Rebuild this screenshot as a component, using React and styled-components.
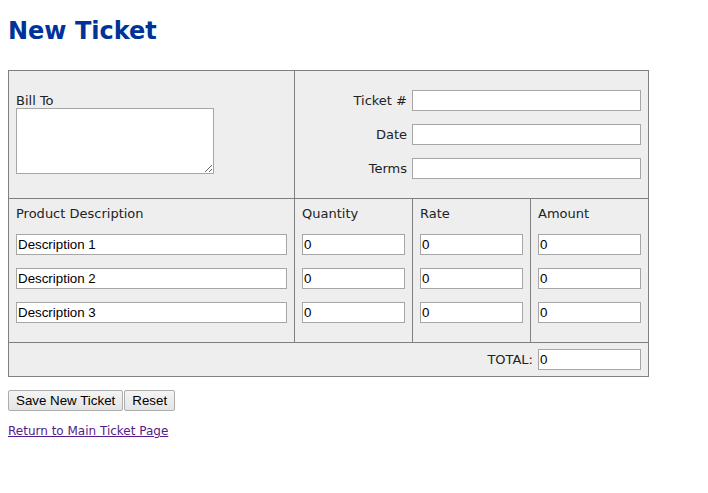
import styled, { createGlobalStyle } from 'styled-components';

const rows = ['Description 1', 'Description 2', 'Description 3'];

export default function App() {
  return (
    <>
      <GlobalStyle />
      <Page>
        <Title>New Ticket</Title>
        <form onSubmit={(e) => e.preventDefault()}>
          <TicketGrid>
            <Cell $center $lift>
              <Label>Bill To</Label>
              <TextArea />
            </Cell>
            <Cell $span={3} $center>
              <MetaList>
                <MetaRow>
                  <Label>Ticket #</Label>
                  <MetaInput />
                </MetaRow>
                <MetaRow>
                  <Label>Date</Label>
                  <MetaInput />
                </MetaRow>
                <MetaRow>
                  <Label>Terms</Label>
                  <MetaInput />
                </MetaRow>
              </MetaList>
            </Cell>

            <Cell>
              <Label>Product Description</Label>
              {rows.map((r) => (
                <Field key={r} defaultValue={r} />
              ))}
            </Cell>
            <Cell>
              <Label>Quantity</Label>
              {rows.map((r) => (
                <Field key={r} defaultValue="0" />
              ))}
            </Cell>
            <Cell>
              <Label>Rate</Label>
              {rows.map((r) => (
                <Field key={r} defaultValue="0" />
              ))}
            </Cell>
            <Cell>
              <Label>Amount</Label>
              {rows.map((r) => (
                <Field key={r} defaultValue="0" />
              ))}
            </Cell>

            <TotalCell>
              <Label>TOTAL:</Label>
              <TotalInput defaultValue="0" />
            </TotalCell>
          </TicketGrid>

          <Buttons>
            <Button type="submit">Save New Ticket</Button>
            <Button type="reset">Reset</Button>
          </Buttons>
        </form>
        <BackLink href="#">Return to Main Ticket Page</BackLink>
      </Page>
    </>
  );
}

const GlobalStyle = createGlobalStyle`
  body {
    margin: 0;
    background: #fff;
    font-family: 'DejaVu Sans', Verdana, sans-serif;
    font-size: 13px;
    color: #222;
  }
`;

const Page = styled.div`
  padding: 17px 8px 8px;
`;

const Title = styled.h1`
  margin: 0 0 25px;
  font-size: 24px;
  line-height: 28px;
  font-weight: bold;
  color: #003399;
`;

const TicketGrid = styled.div`
  display: grid;
  grid-template-columns: 285px 117px 117px 117px;
  grid-template-rows: 127px 143px 33px;
  gap: 1px;
  width: max-content;
  border: 1px solid #808080;
  background: #808080;
`;

const Cell = styled.div`
  grid-column: span ${(p) => p.$span || 1};
  background: #eeeeee;
  padding: 7px;
  display: flex;
  flex-direction: column;
  justify-content: ${(p) => (p.$center ? 'center' : 'flex-start')};
  gap: ${(p) => (p.$center ? '0' : '13px')};
  ${(p) => p.$lift && 'padding-bottom: 9px;'}
`;

const Label = styled.span`
  line-height: 15px;
  white-space: nowrap;
`;

const inputBase = `
  box-sizing: border-box;
  height: 21px;
  border: 1px solid #a6a6a6;
  background: #fff;
  padding: 0 1px;
  font-family: 'Liberation Sans', Arial, sans-serif;
  font-size: 13.33px;
  color: #000;
  outline: none;
`;

const TextArea = styled.textarea`
  box-sizing: border-box;
  width: 198px;
  height: 66px;
  margin: 0;
  border: 1px solid #a6a6a6;
  font-family: 'Liberation Mono', monospace;
  font-size: 13px;
`;

const MetaList = styled.div`
  display: flex;
  flex-direction: column;
  gap: 13px;
`;

const MetaRow = styled.div`
  display: flex;
  justify-content: flex-end;
  align-items: center;
  gap: 5px;
`;

const MetaInput = styled.input`
  ${inputBase}
  width: 229px;
`;

const Field = styled.input`
  ${inputBase}
  width: 100%;
`;

const TotalCell = styled.div`
  grid-column: span 4;
  background: #eeeeee;
  display: flex;
  justify-content: flex-end;
  align-items: center;
  gap: 5px;
  padding: 0 7px;
`;

const TotalInput = styled.input`
  ${inputBase}
  width: 103px;
`;

const Buttons = styled.div`
  display: flex;
  gap: 1px;
  margin-top: 13px;
`;

const Button = styled.button`
  box-sizing: border-box;
  height: 21px;
  padding: 0 7px;
  border: 1px solid #adadad;
  border-radius: 2px;
  background: linear-gradient(#f4f4f4, #e4e4e4);
  font-family: 'Liberation Sans', Arial, sans-serif;
  font-size: 13.33px;
  color: #000;
`;

const BackLink = styled.a`
  display: inline-block;
  margin-top: 13px;
  font-size: 12px;
  line-height: 14px;
  color: #551a8b;
  text-decoration: underline;
`;
